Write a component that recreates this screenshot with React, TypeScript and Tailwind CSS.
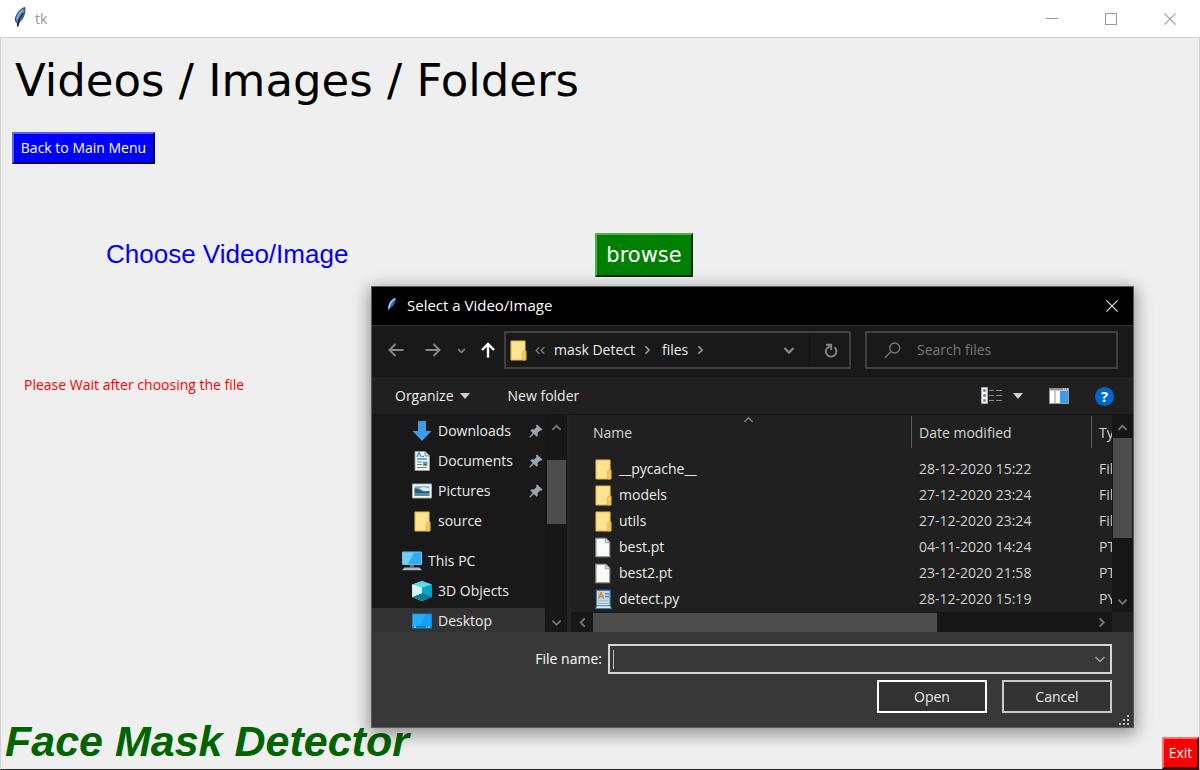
import React from "react";

type IconProps = { className?: string };
type Dir = "up" | "down" | "left" | "right";

const chevrons: Record<Dir, string> = {
  up: "M1.5 7.5 6 3l4.500 4.500",
  down: "M1.500 4 6 8.500 10.500 4",
  left: "M8.500 1.500 4 6l4.500 4.500",
  right: "M4 1.500 8.500 6 4 10.500",
};

function Chevron({ dir, className = "size-3", width = 2 }: { dir: Dir; className?: string; width?: number }) {
  return (
    <svg viewBox="0 0 12 12" className={className} fill="none" stroke="currentColor" strokeWidth={width} aria-hidden="true">
      <path d={chevrons[dir]} />
    </svg>
  );
}

function Arrow({ dir }: { dir: "left" | "right" | "up" }) {
  const d = { left: "M15.500 8H1.500M7.500 2 1.500 8l6 6", right: "M.5 8h14M8.500 2l6 6-6 6", up: "M8 15.500V2M2 8l6-6 6 6" }[dir];
  return (
    <svg viewBox="0 0 16 16" className="size-4" fill="none" stroke="currentColor" strokeWidth={dir === "up" ? 2.4 : 1.9} aria-hidden="true">
      <path d={d} />
    </svg>
  );
}

function Feather({ className }: IconProps) {
  return (
    <svg viewBox="0 0 12 20" className={className} aria-hidden="true">
      <path d="M10.800.5C6 2 2 7 1.500 12c-.2 2 .5 3.500 1.800 3.800L3.600 19.500 5 15.500C9 12.500 11.500 6 10.800.5Z" fill="#5688bd" stroke="#2d3540" strokeWidth="1" />
      <path d="M8.500 3.500C5.500 5.500 3.500 8.500 3 12" fill="none" stroke="#8db8e2" strokeWidth="1.300" />
      <path d="M9 6 5 13 3.700 19" fill="none" stroke="#101418" strokeWidth="1.200" />
    </svg>
  );
}

function SmallFeather({ className }: IconProps) {
  return (
    <svg viewBox="0 0 10 15" className={className} aria-hidden="true">
      <path d="M8.500.8C5 2 1.500 6.500 1.200 11L1 14l2-2.500C6.500 9 9 5 8.500.8Z" fill="#4a8ed6" />
      <path d="M8 1.500C5 3 2.500 6 1.800 11" fill="none" stroke="#b8dcfa" strokeWidth="1.300" />
      <path d="M7.500 4 3 11" stroke="#16375f" strokeWidth=".7" />
    </svg>
  );
}

function Folder() {
  return (
    <svg viewBox="0 0 18 22" preserveAspectRatio="none" className="h-[21px] w-[17px]" aria-hidden="true">
      <path d="M1 1h15v20H1z" fill="#ffe391" stroke="#d9b33f" />
      <path d="M13.500 21v-8.500L15 11.500h2V21z" fill="#f3cd58" stroke="#d9b33f" />
    </svg>
  );
}

function Page() {
  return (
    <svg viewBox="0 0 18 22" preserveAspectRatio="none" className="h-[21px] w-[17px]" aria-hidden="true">
      <path d="M1 1.500h10.500L15.500 5.500v15H1z" fill="#f8f9fa" stroke="#9b9b9b" strokeWidth="1.300" />
      <path d="M11 1.500V6h4.500" fill="#ddd" stroke="#9b9b9b" />
    </svg>
  );
}

function PyFile() {
  return (
    <svg viewBox="0 0 18 22" preserveAspectRatio="none" className="h-[21px] w-[17px]" aria-hidden="true">
      <path d="M1.500 1.500h14.500V18H1.500z" fill="#b9d9f3" stroke="#3f7fb5" strokeWidth="1.200" />
      <path d="m4 10 2.200-6h.6L9 10M5 8h3" fill="none" stroke="#ef7d22" strokeWidth="1.500" />
      <path d="M10.500 5H15M10.500 8H15" stroke="#3b80d6" strokeWidth="1.300" />
      <path d="M4 11.500h10v6H4z" fill="#e6eff8" />
      <path d="M4 12.500h10M4 15h10" stroke="#8097b0" />
      <path d="M2 17.500.5 20.500h17L16 17.500z" fill="#d9eaf8" stroke="#3f78a8" />
    </svg>
  );
}

function DownloadIcon() {
  return (
    <svg viewBox="0 0 20 20" className="size-5" aria-hidden="true">
      <path d="M6 0h8v10h5.500L10 20 .5 10H6z" fill="#3c9cec" />
    </svg>
  );
}

function DocumentIcon() {
  return (
    <svg viewBox="0 0 20 20" className="size-5" aria-hidden="true">
      <path d="M3 .5h10L17.500 5v14.500H3z" fill="#fbfbfb" stroke="#999" />
      <path d="M13 .5V5h4.500" fill="#ddd" stroke="#888" />
      <path d="m5 6 1.500-4h1L9 6M10 5.500h2M5 8h10" fill="none" stroke="#2e94d8" strokeWidth="1.400" />
      <path d="M5 11h5M5 13.500h5M5 16.500h10" stroke="#777" />
      <path d="M11 10.500h4.500v4H11z" fill="#4caad9" />
      <path d="m11 14.500 2-2 2.500 2z" fill="#3b6852" />
    </svg>
  );
}

function PictureIcon() {
  return (
    <svg viewBox="0 0 20 20" className="size-5" aria-hidden="true">
      <path d="M.5 3h19v14H.5z" fill="#fff" stroke="#aaa" />
      <path d="M2.500 5h15v10h-15z" fill="#7cb8e4" />
      <path d="M2.500 7.500c3-1 5 2 9 3l6-.5v2h-15z" fill="#355e61" />
      <path d="M8 7.500c2-2 5-1 9 0V10c-3 0-6 0-9-2.500" fill="#e2eff8" />
      <path d="M2.500 12h15v3h-15z" fill="#518cba" />
    </svg>
  );
}

function PcIcon() {
  return (
    <svg viewBox="0 0 20 20" className="size-5" aria-hidden="true">
      <path d="M.5 1h19v12.500H.5z" fill="#31aaf5" stroke="#65c3f2" />
      <path d="M1 1.500h11L6 13H1z" fill="#75ccfb" />
      <path d="M8 14h4v2.500H8z" fill="#547288" />
      <path d="M2.500 16.500h15l2.500 2.700H0z" fill="#aebac4" />
    </svg>
  );
}

function CubeIcon() {
  return (
    <svg viewBox="0 0 20 20" className="size-5" aria-hidden="true">
      <path d="M10 0 19.800 3.500V16L10 20 .2 16V3.500z" fill="#25b7cf" />
      <path d="m.2 3.500 9.800 3V20L.2 16z" fill="#b7f0ef" />
      <path d="m19.800 3.500-9.800 3V20l9.800-4z" fill="#0ba4c6" />
      <path d="M10 0 .2 3.500l9.800 3 9.800-3z" fill="#5bdbe2" />
      <path d="m10 12-9.800 4L10 20l9.800-4z" fill="#087f93" />
      <path d="m.2 16 9.800-4V6.500L.2 3.500z" fill="#d2f7f5" />
    </svg>
  );
}

function DesktopIcon() {
  return (
    <svg viewBox="0 0 20 20" className="size-5" aria-hidden="true">
      <path d="M.5 3h19v14H.5z" fill="#12a0fb" stroke="#1686ce" />
      <path d="M1 3.500h13L7 15H1z" fill="#29adff" />
      <path d="M1 15.500h18" stroke="#0870bd" />
      <path d="M2 16h2M14 16h1M16 16h2" stroke="#dff4ff" />
    </svg>
  );
}

function Pin() {
  return (
    <svg viewBox="0 0 14 14" className="size-3.5" aria-hidden="true">
      <path d="m8 .5 5.500 5-1.300 1.300-1-.3-2.700 2.500.4 2.500-1.300 1.200-2.700-2.600L1 13.700.2 13l3.500-4L1.300 6.500l1.200-1.300L5 5.500 7.500 3 7 1.500z" fill="#9ba5ad" />
    </svg>
  );
}

function ViewIcon() {
  return (
    <svg viewBox="0 0 21 18" className="h-[18px] w-[21px]" aria-hidden="true">
      <path d="M.5.5h6v16h-6z" fill="#f5f5f5" stroke="#aaa" />
      <path d="M2.500 2.500h2v2h-2zM2.500 7.500h2v2h-2zM2.500 12.500h2v2h-2z" fill="#fff" stroke="#8c9da8" />
      <path d="M3 3.500h1" stroke="#36a454" />
      <path d="M3 8.500h1" stroke="#327fc7" />
      <path d="M3 13.500h1" stroke="#d54a42" />
      <path d="M8 3.500h5M15 3.500h6M8 8.500h5M15 8.500h6M8 13.500h5M15 13.500h6" stroke="#888" />
    </svg>
  );
}

function PaneIcon() {
  return (
    <svg viewBox="0 0 20 16" className="h-4 w-5" aria-hidden="true">
      <path d="M.5.5h19v15H.5z" fill="#fff" stroke="#9a9a9a" />
      <path d="M0 0h20v2.500H0z" fill="#929292" />
      <path d="M6 3v12" stroke="#aaa" strokeWidth="1.300" />
      <path d="M11 3h8v12h-8z" fill="#3d9ce9" />
      <path d="M14 1h1M16 1h1M18 1h1" stroke="#fff" />
    </svg>
  );
}

function Cross({ className }: IconProps) {
  return (
    <svg viewBox="0 0 12 12" className={className} stroke="currentColor" strokeWidth="1.100" aria-hidden="true">
      <path d="m.4.4 11.200 11.200M11.600.4.4 11.600" />
    </svg>
  );
}

function Caret() {
  return (
    <svg viewBox="0 0 10 6" className="h-[6px] w-[10px]" fill="#d0d0d0" aria-hidden="true">
      <path d="M0 0h10L5 6z" />
    </svg>
  );
}

const places = [
  { name: "Downloads", icon: <DownloadIcon />, pinned: true },
  { name: "Documents", icon: <DocumentIcon />, pinned: true },
  { name: "Pictures", icon: <PictureIcon />, pinned: true },
  { name: "source", icon: <Folder />, pinned: false },
];

const files = [
  { name: "__pycache__", date: "28-12-2020 15:22", type: "File folder", icon: <Folder /> },
  { name: "models", date: "27-12-2020 23:24", type: "File folder", icon: <Folder /> },
  { name: "utils", date: "27-12-2020 23:24", type: "File folder", icon: <Folder /> },
  { name: "best.pt", date: "04-11-2020 14:24", type: "PT File", icon: <Page /> },
  { name: "best2.pt", date: "23-12-2020 21:58", type: "PT File", icon: <Page /> },
  { name: "detect.py", date: "28-12-2020 15:19", type: "PY File", icon: <PyFile /> },
];

function Place({ name, icon, pinned }: { name: string; icon: React.ReactNode; pinned?: boolean }) {
  return (
    <li>
      <button type="button" className="flex h-[30px] w-full items-center pr-0.5 pl-10 text-left">
        <span className="flex w-5 justify-center">{icon}</span>
        <span className="flex-1 pl-1.5">{name}</span>
        {pinned && <Pin />}
      </button>
    </li>
  );
}

function FileDialog() {
  return (
    <section
      role="dialog"
      aria-label="Select a Video/Image"
      className="absolute top-[286px] left-[371px] flex w-[763px] flex-col border border-[#5c5c5c] bg-[#191919] text-sm text-[#ececec] shadow-[0_4px_16px_2px_rgba(0,0,0,0.4)]"
    >
      <header className="flex h-[39px] items-center border-b border-[#333] bg-black pr-[15px] pl-[15px]">
        <SmallFeather className="mb-1 h-[15px] w-[10px]" />
        <h2 className="flex-1 pl-[10px] text-[15px] text-white">Select a Video/Image</h2>
        <button type="button" aria-label="Close dialog">
          <Cross className="size-3" />
        </button>
      </header>

      <div className="flex h-[51px] items-center pr-[15px] pb-[3px] pl-4">
        <button type="button" aria-label="Back" className="text-[#8a8a8a]"><Arrow dir="left" /></button>
        <button type="button" aria-label="Forward" className="ml-[21px] text-[#8a8a8a]"><Arrow dir="right" /></button>
        <button type="button" aria-label="Recent locations" className="ml-4 text-[#777]"><Chevron dir="down" className="size-[9px]" width={2.400} /></button>
        <button type="button" aria-label="Up" className="ml-[14px] text-white"><Arrow dir="up" /></button>
        <div className="ml-2 flex h-[38px] w-[347px] items-center border-2 border-[#404040] pl-1">
          <Folder />
          <button type="button" aria-label="Earlier folders" className="ml-1.5 flex text-[#8a8a8a]">
            <Chevron dir="left" className="-mr-1 size-[9px]" width={1.500} />
            <Chevron dir="left" className="size-[9px]" width={1.500} />
          </button>
          <button type="button" className="ml-[7px]">mask Detect</button>
          <Chevron dir="right" className="ml-[7px] size-[10px] text-[#999]" />
          <button type="button" className="ml-2.5">files</button>
          <Chevron dir="right" className="ml-[7px] size-[10px] text-[#999]" />
          <button type="button" aria-label="Previous locations" className="ml-auto pr-[14px] text-[#858585]"><Chevron dir="down" width={2.400} /></button>
          <button type="button" aria-label="Refresh" className="flex h-full w-10 items-center justify-center border-l border-[#131313] pl-0.5 text-[#858585]">
            <svg viewBox="0 0 14 15" className="h-[15px] w-[14px]" fill="none" stroke="currentColor" strokeWidth="1.900" aria-hidden="true">
              <path d="M10.500 4.200A5.300 5.300 0 1 1 3 5M2 1.800h5.200V7M3 5.500l4-3.500" />
            </svg>
          </button>
        </div>
        <label className="ml-[14px] flex h-[38px] flex-1 items-center border-2 border-[#404040] pl-[17px] text-[#777]">
          <svg viewBox="0 0 17 17" className="size-[17px]" fill="none" stroke="currentColor" strokeWidth="1.300" aria-hidden="true">
            <circle cx="10.700" cy="6" r="5" />
            <path d="M7 9.500.8 16" />
          </svg>
          <input type="search" aria-label="Search files" placeholder="Search files" className="ml-4 w-0 flex-1 bg-transparent outline-none placeholder:text-[#777]" />
        </label>
      </div>

      <div className="flex h-[38px] items-center border-b border-[#151515] bg-[#202020] pt-px pr-[19px] pl-[23px]">
        <button type="button" className="flex items-center gap-1.5">Organize <Caret /></button>
        <button type="button" className="ml-[38px]">New folder</button>
        <button type="button" aria-label="Change your view" className="ml-auto"><ViewIcon /></button>
        <button type="button" aria-label="More view options" className="ml-[11px]"><Caret /></button>
        <button type="button" aria-label="Show the preview pane" className="ml-[26px]"><PaneIcon /></button>
        <button type="button" aria-label="Help" className="ml-[26px] flex size-[19px] items-center justify-center rounded-full bg-[#0067ca] text-[15px] leading-none font-bold text-white">?</button>
      </div>

      <div className="flex h-[217px]">
        <nav aria-label="Places" className="w-[173px] overflow-hidden pt-px">
          <ul>
            {places.map((p) => <Place key={p.name} {...p} />)}
            <li>
              <button type="button" className="mt-2.5 flex h-[30px] w-full items-center pl-[30px] text-left">
                <PcIcon />
                <span className="pl-1.5">This PC</span>
              </button>
            </li>
            <Place name="3D Objects" icon={<CubeIcon />} />
            <li className="border-t-2 border-[#191919]">
              <button type="button" className="flex h-7 w-full items-center bg-[#333] pb-0.5 pl-10 text-left">
                <DesktopIcon />
                <span className="pl-1.5">Desktop</span>
              </button>
            </li>
          </ul>
        </nav>
        <div className="flex w-[22px] flex-col items-center bg-[#171717] text-[#777]">
          <button type="button" aria-label="Scroll places up" className="flex h-[23px] items-center pt-1"><Chevron dir="up" className="size-[11px]" /></button>
          <div className="mt-[22px] h-16 w-[19px] bg-[#4d4d4d]" />
          <button type="button" aria-label="Scroll places down" className="mt-auto flex h-5 items-center"><Chevron dir="down" className="size-[11px]" /></button>
        </div>
        <div className="flex min-w-0 flex-1 flex-col border-l-4 border-[#242424] bg-[#202020]">
          <div className="flex h-[197px]">
            <div className="relative min-w-0 flex-1 overflow-hidden pt-px">
              <table className="w-full table-fixed border-collapse text-left whitespace-nowrap">
                <colgroup>
                  <col />
                  <col className="w-[180px]" />
                  <col className="w-[21px]" />
                </colgroup>
                <thead>
                  <tr className="h-10 align-top text-[#d6d6d6]">
                    <th className="p-0 font-normal">
                      <button type="button" className="flex h-8 w-full items-center pt-0.5 pl-[22px]">Name</button>
                    </th>
                    <th className="p-0 font-normal">
                      <button type="button" className="flex h-8 w-full items-center border-l border-[#5d5d5d] pt-0.5 pl-[7px]">Date modified</button>
                    </th>
                    <th className="overflow-hidden p-0 font-normal">
                      <button type="button" className="flex h-8 items-center border-l border-[#5d5d5d] pt-0.5 pl-[7px]">Type</button>
                    </th>
                  </tr>
                </thead>
                <tbody>
                  {files.map((f) => (
                    <tr key={f.name} className="h-[26px]">
                      <td className="p-0">
                        <span className="flex items-center gap-[7px] pl-6">{f.icon}{f.name}</span>
                      </td>
                      <td className="p-0 pl-2 text-[#d0d0d0]">{f.date}</td>
                      <td className="overflow-hidden p-0 pl-2 text-[#d0d0d0]">{f.type}</td>
                    </tr>
                  ))}
                </tbody>
              </table>
              <Chevron dir="up" className="absolute top-0 left-[172px] size-[11px] text-[#8a8a8a]" width={1.500} />
            </div>
            <div className="flex w-[21px] flex-col items-center bg-[#171717] text-[#777]">
              <button type="button" aria-label="Scroll files up" className="flex h-[23px] items-center pt-1"><Chevron dir="up" className="size-[11px]" /></button>
              <div className="h-[100px] w-[19px] bg-[#4d4d4d]" />
              <button type="button" aria-label="Scroll files down" className="mt-auto flex h-[22px] items-center"><Chevron dir="down" className="size-[11px]" /></button>
            </div>
          </div>
          <div className="flex h-5 pr-[21px]">
            <div className="flex flex-1 items-center bg-[#171717] text-[#777]">
              <button type="button" aria-label="Scroll files left" className="flex w-[22px] justify-center"><Chevron dir="left" className="size-[11px]" /></button>
              <div className="h-[19px] w-[344px] bg-[#4d4d4d]" />
              <button type="button" aria-label="Scroll files right" className="ml-auto flex w-[22px] justify-center"><Chevron dir="right" className="size-[11px]" /></button>
            </div>
          </div>
        </div>
      </div>

      <form className="relative flex h-[95px] flex-col items-end bg-[#383838] pt-3 pr-[21px]" onSubmit={(e) => e.preventDefault()}>
        <div className="flex items-center">
          <label htmlFor="file-name" className="pr-1.5 text-white">File name:</label>
          <div className="flex h-[30px] w-[504px] items-center border-2 border-[#d6d6d6] pr-1 pl-[3px]">
            <span className="h-[19px] w-px bg-[#c0c0c0]" />
            <input id="file-name" type="text" className="h-full min-w-0 flex-1 bg-transparent px-1 outline-none" />
            <button type="button" aria-label="Previous file names" className="text-[#a0a0a0]"><Chevron dir="down" width={1.500} /></button>
          </div>
        </div>
        <div className="mt-1.5 flex gap-[15px]">
          <button type="submit" className="h-[33px] w-[110px] border-2 border-white bg-[#333]">Open</button>
          <button type="button" className="h-[33px] w-[110px] border-2 border-[#c9c9c9] bg-[#333]">Cancel</button>
        </div>
        <svg viewBox="0 0 12 12" className="absolute right-[3px] bottom-px size-3" fill="#bdbdbd" aria-hidden="true">
          <path d="M9 1h2v2H9zM9 5h2v2H9zM9 9h2v2H9zM5 5h2v2H5zM5 9h2v2H5zM1 9h2v2H1z" />
        </svg>
      </form>
    </section>
  );
}

export default function App() {
  return (
    <div className="relative flex min-h-screen flex-col overflow-hidden bg-[#efefef] font-['Open_Sans','Noto_Sans',sans-serif] text-sm">
      <header className="flex h-[38px] items-center border-b border-[#d2d2d2] bg-white pr-6 pl-[14px] text-[#999]">
        <Feather className="mb-1 h-5 w-3" />
        <span className="flex-1 pl-[9px]">tk</span>
        <div className="flex items-center gap-[47px]">
          <button type="button" aria-label="Minimize" className="h-px w-3 bg-[#999]" />
          <button type="button" aria-label="Maximize" className="size-3 border border-[#999]" />
          <button type="button" aria-label="Close"><Cross className="size-3" /></button>
        </div>
      </header>

      <main className="flex flex-1 flex-col items-start border-x border-b border-x-[#d2d2d2] border-b-[#222] pt-[15px]">
        <h1 className="pl-[14px] font-['DejaVu_Sans',sans-serif] text-[45px] leading-[56px] text-black">Videos / Images / Folders</h1>
        <button type="button" className="mt-[23px] ml-[11px] h-8 w-[143px] border-2 border-t-[#6060ff] border-r-[#000050] border-b-[#000050] border-l-[#6060ff] bg-[#0000ff] text-white">
          Back to Main Menu
        </button>
        <div className="mt-[69px] flex items-center pl-[105px]">
          <span className="w-[489px] font-['Liberation_Sans',sans-serif] text-[26px] text-[#0000ff]">Choose Video/Image</span>
          <button type="button" className="h-11 w-[98px] border-2 border-t-[#50b050] border-r-[#002800] border-b-[#002800] border-l-[#50b050] bg-[#008000] font-['DejaVu_Sans',sans-serif] text-[21px] text-white">
            browse
          </button>
        </div>
        <p className="mt-[98px] pl-[23px] text-[#ff0000]">Please Wait after choosing the file</p>
        <footer className="mt-auto flex w-full items-end justify-between">
          <strong className="pl-1 font-['Liberation_Sans',sans-serif] text-[43px] leading-[56px] text-[#006400] italic">Face Mask Detector</strong>
          <button type="button" className="h-8 w-[37px] border-2 border-t-[#ff7070] border-r-[#500000] border-b-[#500000] border-l-[#ff7070] bg-[#ff0000] text-white">Exit</button>
        </footer>
      </main>

      <FileDialog />
    </div>
  );
}
